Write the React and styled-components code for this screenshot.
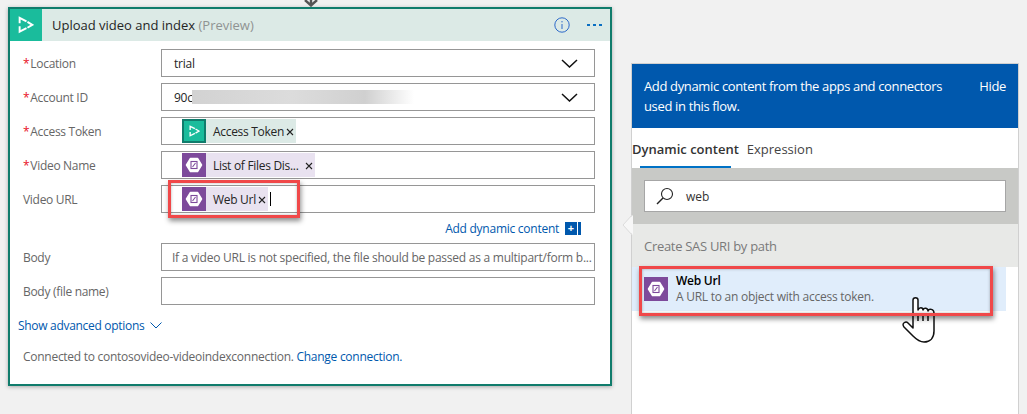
import React from 'react'
import styled, { createGlobalStyle } from 'styled-components'

const Global = createGlobalStyle`
  html, body { margin: 0; padding: 0; height: 100%; overflow: hidden; background: #f1f1f1; }
  body { font-family: 'Open Sans', 'Noto Sans', sans-serif; font-size: 12px; color: #252525; }
`

const Page = styled.div`
  display: flex;
  align-items: flex-start;
  width: 1027px;
  height: 414px;
  overflow: hidden;
  position: relative;
`

const Card = styled.section`
  position: relative;
  box-sizing: border-box;
  flex: none;
  width: 604px;
  height: 379px;
  margin: 7px 0 0 8px;
  background: #fff;
  border: 2px solid #107c6c;
  box-shadow: 0 1px 4px rgba(0, 0, 0, 0.3);
`

const FlowArrow = styled.svg`
  position: absolute;
  left: 294px;
  top: -9px;
`

const CardHeader = styled.header`
  display: flex;
  align-items: center;
  height: 32px;
  background: #dceae6;
`

const HeaderIcon = styled.div`
  display: flex;
  align-items: center;
  justify-content: center;
  width: 32px;
  height: 32px;
  background: #1abc9c;
`

const CardTitle = styled.h2`
  flex: 1;
  margin: 0 0 0 10px;
  font-size: 13px;
  font-weight: 400;
  letter-spacing: 0;
  color: #252525;
  span { color: #8f9392; }
`

const InfoIcon = styled.svg`
  margin-right: 17px;
`

const Dots = styled.div`
  display: flex;
  gap: 3px;
  margin-right: 8px;
  i { width: 3px; height: 2px; background: #0a6fc2; }
`

const Form = styled.div`
  display: flex;
  flex-direction: column;
  gap: 6px;
  padding: 8px 15px 0 13px;
`

const Row = styled.div`
  display: flex;
  align-items: center;
  height: 28px;
`

const Label = styled.label`
  flex: none;
  width: 138px;
  color: #666;
  letter-spacing: -0.3px;
  b { color: #e81123; font-weight: 400; margin-right: 1px; }
`

const Field = styled.div`
  box-sizing: border-box;
  flex: 1;
  position: relative;
  display: flex;
  align-items: center;
  gap: 2px;
  height: 28px;
  padding-left: ${p => p.$inset}px;
  border: 1px solid #969696;
  background: #fff;
  color: ${p => (p.$muted ? '#666' : '#252525')};
  letter-spacing: -0.25px;
  white-space: nowrap;
  overflow: hidden;
`

const Chevron = styled.svg`
  position: absolute;
  right: 16px;
  top: 9px;
`

const Blurred = styled.div`
  width: 222px;
  height: 14px;
  margin-left: -3px;
  background: linear-gradient(90deg, #d2d2d2 0%, #dcdcdc 45%, #d0d0d0 78%, #ffffff 100%);
  filter: blur(0.6px);
`

const Token = styled.div`
  display: flex;
  align-items: center;
  height: 24px;
  width: ${p => p.$width}px;
  flex: none;
  background: ${p => (p.$kind === 'play' ? '#dceae6' : '#e9e2f0')};
  color: #252525;
  letter-spacing: -0.3px;
`

const TokenIcon = styled.div`
  box-sizing: border-box;
  display: flex;
  align-items: center;
  justify-content: center;
  flex: none;
  width: 24px;
  height: 24px;
  margin-right: 8px;
  background: ${p => (p.$kind === 'play' ? '#1abc9c' : '#7d4a9b')};
  border: ${p => (p.$kind === 'play' ? '2px solid #107c6c' : '0')};
`

const TokenText = styled.span`
  flex: none;
  margin-left: -1px;
`

const Remove = styled.svg`
  flex: none;
  margin-left: ${p => p.$gap}px;
  margin-top: 2px;
`

const Caret = styled.i`
  width: 1px;
  height: 14px;
  background: #000;
`

const DynamicRow = styled.div`
  display: flex;
  align-items: center;
  justify-content: flex-end;
  gap: 6px;
  height: 18px;
  margin-right: 14px;
`

const LinkText = styled.a`
  color: #0058ad;
  letter-spacing: -0.26px;
`

const PlusBox = styled.div`
  box-sizing: border-box;
  width: 16px;
  height: 13px;
  padding-right: 4px;
  background: linear-gradient(90deg, #0058ad 12px, #fff 12px 13px, #0058ad 13px);
  color: #fff;
  font-size: 11px;
  font-weight: 700;
  line-height: 12px;
  text-align: center;
`

const Advanced = styled.div`
  display: flex;
  align-items: center;
  gap: 6px;
  margin: 11px 0 0 8px;
  height: 18px;
  color: #0058ad;
  letter-spacing: -0.3px;
`

const Connected = styled.p`
  margin: 14px 0 0 13px;
  color: #666;
  letter-spacing: -0.27px;
  a { color: #0058ad; }
`

const Highlight = styled.div`
  position: absolute;
  box-sizing: border-box;
  left: ${p => p.$x}px;
  top: ${p => p.$y}px;
  width: ${p => p.$w}px;
  height: ${p => p.$h}px;
  border: 3px solid #f04849;
  box-shadow: 1px 3px 5px rgba(0, 0, 0, 0.45), inset 0 0 3px rgba(0, 0, 0, 0.3);
  pointer-events: none;
`

const Panel = styled.aside`
  position: relative;
  box-sizing: border-box;
  flex: none;
  width: 388px;
  height: 351px;
  margin: 63px 0 0 19px;
  background: #fff;
  border: 1px solid #d0d0d0;
  border-bottom: 0;
`

const Pointer = styled.svg`
  position: absolute;
  left: -10px;
  top: 151px;
`

const PanelHead = styled.div`
  display: flex;
  justify-content: space-between;
  height: 64px;
  box-sizing: border-box;
  padding: 12px 12px 0 12px;
  background: #0058ad;
  color: #fff;
  font-size: 13px;
  line-height: 20px;
  letter-spacing: -0.35px;
  p { margin: 0; width: 320px; }
`

const Tabs = styled.div`
  display: flex;
  gap: 8px;
  height: 40px;
  align-items: center;
  font-size: 13px;
`

const Tab = styled.div`
  position: relative;
  height: 40px;
  line-height: 42px;
  color: ${p => (p.$active ? '#333' : '#444')};
  font-weight: ${p => (p.$active ? 600 : 400)};
  ${p => p.$active && `
    &::after {
      content: '';
      position: absolute;
      left: 8px;
      right: 8px;
      bottom: 0;
      height: 2px;
      background: #0072c6;
    }
  `}
`

const SearchBand = styled.div`
  height: 56px;
  box-sizing: border-box;
  padding: 12px 12px 0;
  background: #c8c9c6;
`

const SearchBox = styled.div`
  box-sizing: border-box;
  display: flex;
  align-items: center;
  gap: 12px;
  height: 32px;
  padding-left: 11px;
  background: #fff;
  border: 1px solid #a6a6a6;
  color: #333;
`

const GroupTitle = styled.div`
  box-sizing: border-box;
  height: 43px;
  padding: 13px 12px 0;
  background: #e8e9e7;
  color: #7a7a7a;
  font-size: 13px;
  letter-spacing: -0.3px;
`

const Item = styled.div`
  display: flex;
  align-items: center;
  gap: 8px;
  width: 374px;
  height: 44px;
  box-sizing: border-box;
  padding-left: 12px;
  background: #e0edfb;
`

const ItemIcon = styled.div`
  display: flex;
  align-items: center;
  justify-content: center;
  width: 24px;
  height: 24px;
  background: #7d4a9b;
`

const ItemText = styled.div`
  line-height: 16px;
  letter-spacing: -0.25px;
  strong { display: block; color: #000; font-weight: 600; }
  span { color: #666; }
`

const HandCursor = styled.svg`
  position: absolute;
  left: 902px;
  top: 297px;
`

const PlayGlyph = ({ size = 16 }) => (
  <svg width={size} height={size * 1.1} viewBox="0 0 16 18" fill="none" stroke="#fff" strokeWidth="2">
    <path d="M1.5 7.5V2l7 3.5" />
    <path d="M1.5 10.5V16l7-3.5" />
    <path d="M9.5 6l5 3-5 3" />
  </svg>
)

const BlobGlyph = () => (
  <svg width="18" height="16" viewBox="0 0 18 16">
    <path d="M5.5 1.5h7L16.5 8l-4 6.5h-7L1.5 8z" fill="#fff" stroke="#fff" strokeWidth="1.5" strokeLinejoin="round" />
    <rect x="6" y="4.5" width="6" height="7" fill="none" stroke="#7d4a9b" strokeWidth="1.1" />
    <path d="M7.5 10l3-4" stroke="#7d4a9b" strokeWidth="1.1" />
  </svg>
)

const X = ({ gap }) => (
  <Remove $gap={gap} width="8" height="8" viewBox="0 0 8 8" stroke="#222" strokeWidth="1.1">
    <path d="M1 1l6 6M7 1L1 7" />
  </Remove>
)

const Down = () => (
  <Chevron width="17" height="9" viewBox="0 0 17 9" fill="none" stroke="#111" strokeWidth="1.5">
    <path d="M1 1l7.5 7L16 1" />
  </Chevron>
)

const FormRow = ({ label, required, children }) => (
  <Row>
    <Label>{required && <b>*</b>}{label}</Label>
    {children}
  </Row>
)

export default function App() {
  return (
    <Page>
      <Global />
      <Card>
        <FlowArrow width="14" height="7" viewBox="0 0 14 7" fill="none" stroke="#555" strokeWidth="2.4">
          <path d="M1 0l6 5.5L13 0M7 0v6" />
        </FlowArrow>
        <CardHeader>
          <HeaderIcon><PlayGlyph /></HeaderIcon>
          <CardTitle>Upload video and index <span>(Preview)</span></CardTitle>
          <InfoIcon width="16" height="16" viewBox="0 0 16 16" fill="none" stroke="#2e6ac9">
            <circle cx="8" cy="8" r="7.2" />
            <path d="M8 7v5M8 4v1.4" />
          </InfoIcon>
          <Dots><i /><i /><i /></Dots>
        </CardHeader>
        <Form>
          <FormRow label="Location" required>
            <Field $inset={12}>trial<Down /></Field>
          </FormRow>
          <FormRow label="Account ID" required>
            <Field $inset={12}>90c<Blurred /><Down /></Field>
          </FormRow>
          <FormRow label="Access Token" required>
            <Field $inset={20}>
              <Token $kind="play" $width={114}>
                <TokenIcon $kind="play"><PlayGlyph size={11} /></TokenIcon>
                <TokenText>Access Token</TokenText>
                <X gap={2} />
              </Token>
            </Field>
          </FormRow>
          <FormRow label="Video Name" required>
            <Field $inset={20}>
              <Token $width={133}>
                <TokenIcon><BlobGlyph /></TokenIcon>
                <TokenText>List of Files Dis...</TokenText>
                <X gap={6} />
              </Token>
            </Field>
          </FormRow>
          <FormRow label="Video URL">
            <Field $inset={20}>
              <Token $width={86}>
                <TokenIcon><BlobGlyph /></TokenIcon>
                <TokenText>Web Url</TokenText>
                <X gap={2} />
              </Token>
              <Caret />
            </Field>
          </FormRow>
          <DynamicRow>
            <LinkText>Add dynamic content</LinkText>
            <PlusBox>+</PlusBox>
          </DynamicRow>
          <FormRow label="Body">
            <Field $inset={10} $muted>If a video URL is not specified, the file should be passed as a multipart/form b...</Field>
          </FormRow>
          <FormRow label="Body (file name)">
            <Field $inset={10} />
          </FormRow>
        </Form>
        <Advanced>
          Show advanced options
          <svg width="12" height="7" viewBox="0 0 12 7" fill="none" stroke="#0058ad">
            <path d="M.5.5l5.5 5.5 5.5-5.5" />
          </svg>
        </Advanced>
        <Connected>
          Connected to contosovideo-videoindexconnection. <a>Change connection.</a>
        </Connected>
        <Highlight $x={158} $y={171} $w={132} $h={38} />
      </Card>
      <Panel>
        <Pointer width="11" height="20" viewBox="0 0 11 20">
          <path d="M11 0L1 10l10 10z" fill="#f7f7f7" />
          <path d="M10 0L1 10l9 10" fill="none" stroke="#dcdcdc" />
        </Pointer>
        <PanelHead>
          <p>Add dynamic content from the apps and connectors used in this flow.</p>
          <span>Hide</span>
        </PanelHead>
        <Tabs>
          <Tab $active>Dynamic content</Tab>
          <Tab>Expression</Tab>
        </Tabs>
        <SearchBand>
          <SearchBox>
            <svg width="18" height="18" viewBox="0 0 18 18" fill="none" stroke="#222" strokeWidth="1.1">
              <circle cx="11" cy="7" r="5.5" />
              <path d="M7 11l-6 6" strokeWidth="1.4" />
            </svg>
            web
          </SearchBox>
        </SearchBand>
        <GroupTitle>Create SAS URI by path</GroupTitle>
        <Item>
          <ItemIcon><BlobGlyph /></ItemIcon>
          <ItemText>
            <strong>Web Url</strong>
            <span>A URL to an object with access token.</span>
          </ItemText>
        </Item>
      </Panel>
      <HandCursor width="36" height="48" viewBox="0 0 36 48" fill="#fff" stroke="#111" strokeWidth="1.5" strokeLinejoin="round">
        <path d="M11 3c0-3 5-3 5 0v10c1-3 5-3 5 0 1-3 5-2 5 1 1-3 6-2 6 2v18c0 7-4 11-10 11-5 0-8-3-11-6L2 30c-3-4 2-6 4-4l5 5z" />
        <path d="M16 18v6M21 18v6M26 18v6" />
      </HandCursor>
      <Highlight $x={639} $y={266} $w={354} $h={50} />
    </Page>
  )
}
